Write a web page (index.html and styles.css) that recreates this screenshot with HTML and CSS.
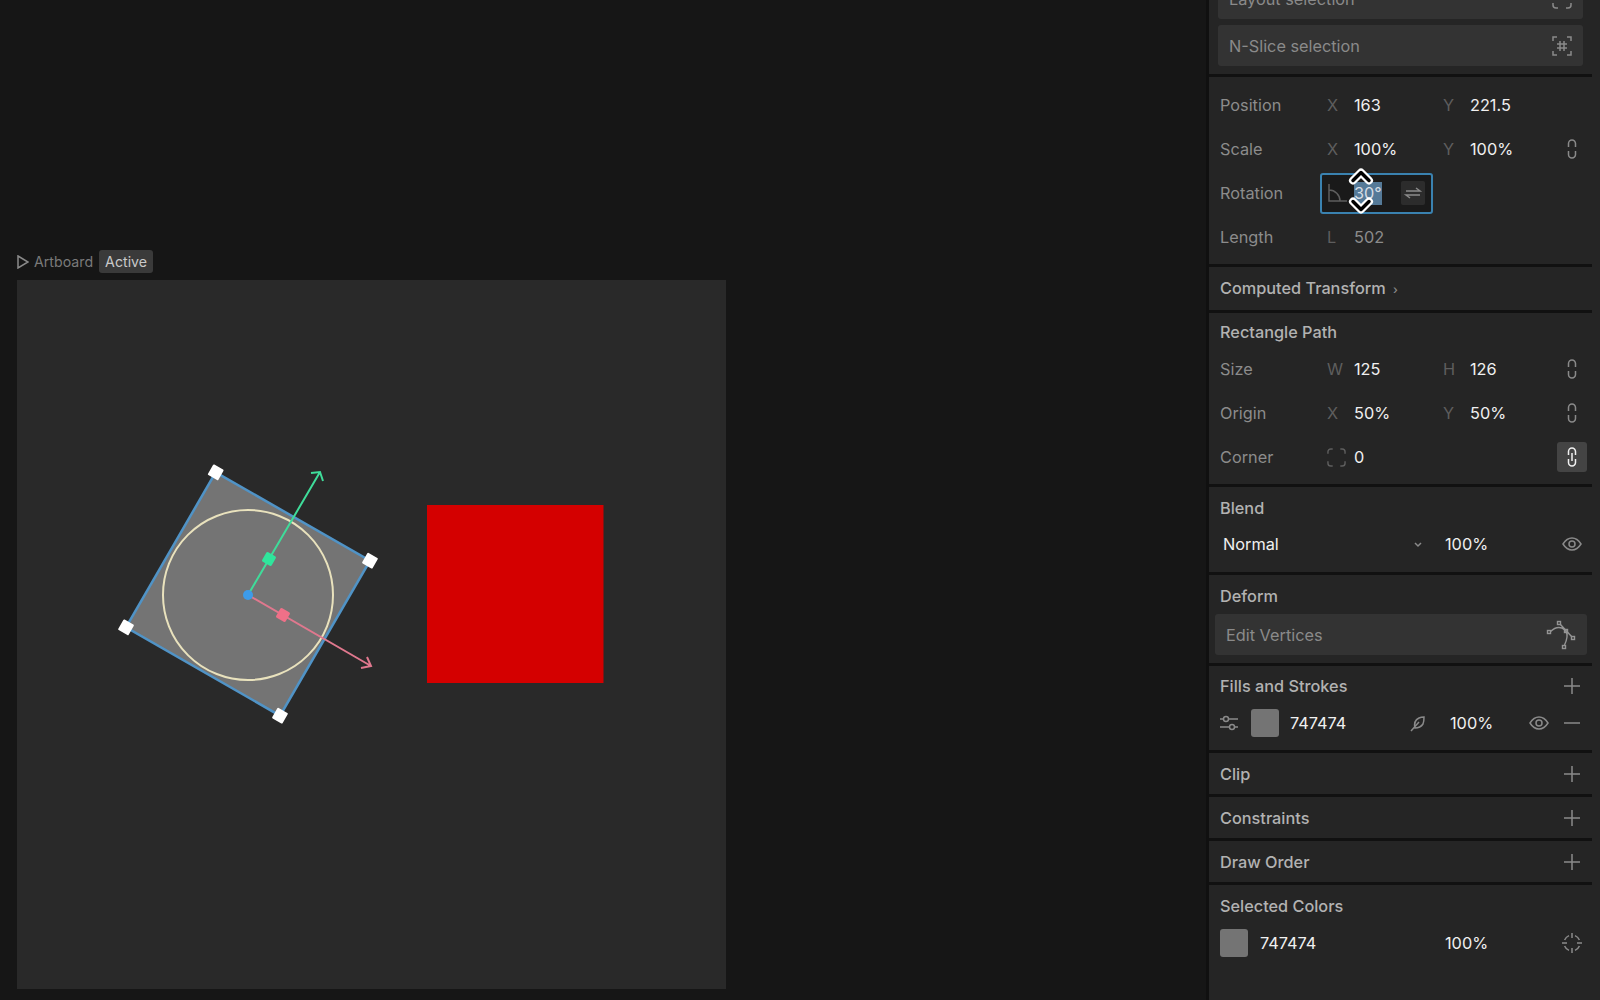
FILE: index.html
```html
<!DOCTYPE html>
<html lang="en">
<head>
    <meta charset="UTF-8">
    <meta name="viewport" content="width=device-width, initial-scale=1.0">
    <title>Rive Editor</title>
    <link rel="stylesheet" href="styles.css">
</head>
<body>
    <svg class="sprite" xmlns="http://www.w3.org/2000/svg">
        <symbol id="i-link" viewBox="0 0 22 22"><path d="M7.500 9V5.500a3.500 3.500 0 0 1 7 0V9M7.500 13v3.500a3.500 3.500 0 0 0 7 0V13"/></symbol>
        <symbol id="i-link-on" viewBox="0 0 22 22"><path d="M7.500 9V5.500a3.500 3.500 0 0 1 7 0V9M7.500 13v3.500a3.500 3.500 0 0 0 7 0V13M11 7v8"/></symbol>
        <symbol id="i-eye" viewBox="0 0 22 22"><path d="M2 11c2.500-4 5.500-6 9-6s6.500 2 9 6c-2.500 4-5.500 6-9 6s-6.500-2-9-6z"/><circle cx="11" cy="11" r="3"/></symbol>
        <symbol id="i-plus" viewBox="0 0 22 22"><path d="M11 3v16M3 11h16"/></symbol>
        <symbol id="i-minus" viewBox="0 0 22 22"><path d="M3 11h16"/></symbol>
        <symbol id="i-target" viewBox="0 0 22 22"><path d="M8 3.600A8 8 0 0 0 3.600 8M14 3.600A8 8 0 0 1 18.400 8M18.400 14A8 8 0 0 1 14 18.400M8 18.400A8 8 0 0 1 3.600 14M11 1v5M11 16v5M1 11h5M16 11h5"/></symbol>
        <symbol id="i-corners" viewBox="0 0 20 20"><path d="M1 6V4a3 3 0 0 1 3-3h2M14 1h2a3 3 0 0 1 3 3v2M19 14v2a3 3 0 0 1-3 3h-2M6 19H4a3 3 0 0 1-3-3v-2"/></symbol>
        <symbol id="i-nslice" viewBox="0 0 20 20"><path d="M1 5V1h4M15 1h4v4M19 15v4h-4M5 19H1v-4M8 5v10M12 5v10M5 8h10M5 12h10"/></symbol>
        <symbol id="i-sliders" viewBox="0 0 20 20"><path d="M0 6h3.500M8.500 6H18M0 14h9.500M14.500 14H18"/><circle cx="6" cy="6" r="2.500"/><circle cx="12" cy="14" r="2.500"/></symbol>
        <symbol id="i-feather" viewBox="0 0 18 18"><path d="M6 14c-1-4 0-8 4-10 2-1 4-1 5-1 0 2 0 5-1 7-2 3-5 4-8 4zM2 17l8-9"/></symbol>
    </svg>

    <main class="canvas">
        <div class="artboard-label">
            <svg class="play" viewBox="0 0 12 14"><path d="M1 1l10 6-10 6z"/></svg>
            <span>Artboard</span>
            <span class="chip">Active</span>
        </div>
        <div class="artboard">
            <svg class="stage" viewBox="17 280 709 709">
                <rect class="red-box" x="427" y="505" width="176.500" height="178"/>
                <polygon class="shape" points="215.700,472.300 370,560.700 280,715.700 126,627.300"/>
                <circle class="shape-circle" cx="248" cy="595" r="85"/>
                <path class="axis-y" d="M248 595L320 472M311 473l9-1 3 9"/>
                <path class="axis-x" d="M248 595L371 666M361 668l10-2-4-9"/>
                <rect class="knob-y" x="263.500" y="553.500" width="11" height="11" rx="1.500" transform="rotate(30 269 559)"/>
                <rect class="knob-x" x="277.500" y="609.500" width="11" height="11" rx="1.500" transform="rotate(30 283 615)"/>
                <circle class="origin" cx="248" cy="595" r="5"/>
                <rect class="handle" x="209.700" y="466.300" width="12" height="12" rx="1" transform="rotate(30 215.700 472.300)"/>
                <rect class="handle" x="364" y="554.700" width="12" height="12" rx="1" transform="rotate(30 370 560.700)"/>
                <rect class="handle" x="274" y="709.700" width="12" height="12" rx="1" transform="rotate(30 280 715.700)"/>
                <rect class="handle" x="120" y="621.300" width="12" height="12" rx="1" transform="rotate(30 126 627.300)"/>
            </svg>
        </div>
    </main>

    <aside class="panel">
        <section class="section section-tools">
            <div class="wide-btn">Layout selection <svg class="icon-20"><use href="#i-corners"/></svg></div>
            <div class="wide-btn">N-Slice selection <svg class="icon-20"><use href="#i-nslice"/></svg></div>
        </section>

        <section class="section section-rows">
            <div class="row">
                <span class="label">Position</span>
                <span class="axis">X</span><span class="value">163</span>
                <span class="axis">Y</span><span class="value">221.5</span>
            </div>
            <div class="row">
                <span class="label">Scale</span>
                <span class="axis">X</span><span class="value">100%</span>
                <span class="axis">Y</span><span class="value">100%</span>
                <svg class="icon"><use href="#i-link"/></svg>
            </div>
            <div class="row">
                <span class="label">Rotation</span>
                <div class="rotation-input">
                    <svg class="angle" viewBox="0 0 20 20"><path d="M2 1v17h18M2 7a11 11 0 0 1 11 11"/></svg>
                    <span class="selected">30°</span>
                    <span class="swap"><svg viewBox="0 0 24 24"><path d="M5 10h14l-4-3M19 14H5l4 3"/></svg></span>
                    <svg class="cursor" viewBox="0 0 28 50">
                        <path class="cursor-out" d="M6 14.500l8-8 8 8M6 35.500l8 8 8-8"/>
                        <path class="cursor-in" d="M6 14.500l8-8 8 8M6 35.500l8 8 8-8"/>
                    </svg>
                </div>
            </div>
            <div class="row">
                <span class="label">Length</span>
                <span class="axis">L</span><span class="value dim">502</span>
            </div>
        </section>

        <section class="section section-collapsed">
            <h3 class="title">Computed Transform <span class="caret">›</span></h3>
        </section>

        <section class="section section-rect">
            <h3 class="title">Rectangle Path</h3>
            <div class="row">
                <span class="label">Size</span>
                <span class="axis">W</span><span class="value">125</span>
                <span class="axis">H</span><span class="value">126</span>
                <svg class="icon"><use href="#i-link"/></svg>
            </div>
            <div class="row">
                <span class="label">Origin</span>
                <span class="axis">X</span><span class="value">50%</span>
                <span class="axis">Y</span><span class="value">50%</span>
                <svg class="icon"><use href="#i-link"/></svg>
            </div>
            <div class="row">
                <span class="label">Corner</span>
                <svg class="corner-icon"><use href="#i-corners"/></svg><span class="value">0</span>
                <span class="link-on"><svg class="icon"><use href="#i-link-on"/></svg></span>
            </div>
        </section>

        <section class="section section-blend">
            <h3 class="title">Blend</h3>
            <div class="blend-row">
                <span class="value">Normal</span>
                <svg class="chevron" viewBox="0 0 14 14"><path d="M4 6l3 3 3-3"/></svg>
                <span class="value">100%</span>
                <svg class="icon"><use href="#i-eye"/></svg>
            </div>
        </section>

        <section class="section section-deform">
            <h3 class="title">Deform</h3>
            <div class="wide-btn deform-btn">Edit Vertices
                <svg class="vertices" viewBox="0 0 32 30">
                    <path d="M5.500 11.500Q11 6 17 8Q23 11 22 17Q21.500 21 19.500 25M15 4l12 13"/>
                    <rect x="2.500" y="10.500" width="3" height="3"/><rect x="12.500" y="1.500" width="3" height="3"/>
                    <rect x="19.500" y="9.500" width="3" height="3"/><rect x="26.500" y="16.500" width="3" height="3"/>
                    <rect x="17.500" y="25.500" width="3" height="3"/>
                </svg>
            </div>
        </section>

        <section class="section section-fills">
            <div class="title-row">
                <h3 class="title">Fills and Strokes</h3>
                <svg class="icon"><use href="#i-plus"/></svg>
            </div>
            <div class="fill-row">
                <svg class="icon-20"><use href="#i-sliders"/></svg>
                <span class="swatch"></span>
                <span class="value">747474</span>
                <svg class="icon-18"><use href="#i-feather"/></svg>
                <span class="value">100%</span>
                <svg class="icon"><use href="#i-eye"/></svg>
                <svg class="icon"><use href="#i-minus"/></svg>
            </div>
        </section>

        <section class="section section-collapsed">
            <div class="title-row"><h3 class="title">Clip</h3><svg class="icon"><use href="#i-plus"/></svg></div>
        </section>
        <section class="section section-collapsed">
            <div class="title-row"><h3 class="title">Constraints</h3><svg class="icon"><use href="#i-plus"/></svg></div>
        </section>
        <section class="section section-collapsed">
            <div class="title-row"><h3 class="title">Draw Order</h3><svg class="icon"><use href="#i-plus"/></svg></div>
        </section>

        <section class="section section-last">
            <h3 class="title">Selected Colors</h3>
            <div class="color-row">
                <span class="swatch"></span>
                <span class="value">747474</span>
                <span class="value">100%</span>
                <svg class="icon"><use href="#i-target"/></svg>
            </div>
        </section>
    </aside>
</body>
</html>
```

FILE: styles.css
```css
* {
    box-sizing: border-box;
}
body {
    margin: 0;
    width: 1600px;
    height: 1000px;
    display: flex;
    overflow: hidden;
    background: #161616;
    color: #8c8c8c;
    font-family: Inter, "Liberation Sans", sans-serif;
    font-size: 16.3px;
}
svg {
    display: block;
    fill: none;
    stroke: currentColor;
    stroke-width: 1.5;
}
.sprite {
    display: none;
}

/* canvas */
.canvas {
    flex: 1;
    display: flex;
    flex-direction: column;
    justify-content: flex-end;
    padding: 0 0 11px 17px;
}
.artboard-label {
    display: flex;
    align-items: center;
    height: 23px;
    margin-bottom: 7px;
    font-size: 14.2px;
    color: #7a7a7a;
}
.play {
    width: 12px;
    height: 14px;
    margin-right: 5px;
    color: #8a8a8a;
}
.chip {
    margin-left: 6px;
    height: 23px;
    line-height: 23px;
    padding: 0 6px;
    border-radius: 3px;
    background: #3a3a3a;
    color: #c9c9c9;
}
.artboard {
    width: 709px;
    height: 709px;
    background: #292929;
}
.stage {
    width: 709px;
    height: 709px;
    stroke: none;
}
.red-box {
    fill: #d40000;
}
.shape {
    fill: #747474;
    stroke: #5093c6;
    stroke-width: 2.5;
}
.shape-circle {
    stroke: #e9e2bd;
    stroke-width: 2;
}
.axis-y {
    stroke: #3fdc9a;
    stroke-width: 2;
}
.axis-x {
    stroke: #e0788e;
    stroke-width: 2;
}
.knob-y {
    fill: #2fe59c;
}
.knob-x {
    fill: #ef7088;
}
.origin {
    fill: #3d9be9;
}
.handle {
    fill: #fff;
}

/* right panel */
.panel {
    width: 394px;
    height: 1000px;
    flex-shrink: 0;
    margin-left: -3px;
    background: #252525;
    border-left: 3px solid #101010;
}
.section {
    margin-right: 8px;
    border-bottom: 3px solid #111;
}
.section-tools {
    display: flex;
    flex-direction: column;
    gap: 6px;
    margin-top: -22px;
    padding: 0 9px 8px;
}
.section-rows {
    padding: 6px 0 5px;
}
.section-collapsed {
    padding: 11px 0 10px;
}
.section-rect {
    padding: 9px 0 5px;
}
.section-rect .title {
    margin-bottom: 5px;
}
.section-blend {
    padding: 11px 0 8px;
}
.section-deform {
    padding: 11px 0 8px;
}
.section-fills {
    padding: 10px 0 10px;
}
.section-last {
    padding: 11px 0 0;
    border-bottom: none;
}

.title {
    margin: 0;
    padding-left: 11px;
    font-size: 16.3px;
    font-weight: 500;
    line-height: 20px;
    color: #b2b2b2;
}
.title-row {
    display: flex;
    justify-content: space-between;
    align-items: center;
    height: 20px;
    padding-right: 9px;
}
.caret {
    margin-left: 3px;
    font-size: 12px;
    color: #8a8a8a;
}

.wide-btn {
    display: flex;
    justify-content: space-between;
    align-items: center;
    height: 41px;
    padding: 0 11px;
    border-radius: 3px;
    background: #333;
    color: #8a8a8a;
}
.deform-btn {
    margin: 8px 5px 0 6px;
    padding-right: 10px;
}
.vertices {
    width: 32px;
    height: 30px;
    stroke-width: 1.4;
    color: #949494;
}

.row {
    display: grid;
    grid-template-columns: 107px 27px 89px 27px 1fr 22px;
    align-items: center;
    height: 44px;
    padding: 0 9px 0 11px;
}
.label {
    color: #8c8c8c;
}
.axis {
    color: #5e5e5e;
}
.value {
    color: #f0f0f0;
}
.dim {
    color: #8c8c8c;
}
.row .icon {
    grid-column: 6;
}
.icon {
    width: 22px;
    height: 22px;
    color: #8a8a8a;
}
.icon-20 {
    width: 20px;
    height: 20px;
    color: #8a8a8a;
}
.icon-18 {
    width: 18px;
    height: 18px;
    color: #8a8a8a;
}
.corner-icon {
    width: 19px;
    height: 19px;
    color: #5e5e5e;
}
.link-on {
    grid-column: 6;
    display: flex;
    align-items: center;
    justify-content: center;
    width: 30px;
    height: 30px;
    margin-left: -4px;
    border-radius: 3px;
    background: #444;
}
.link-on .icon {
    color: #f0f0f0;
}

.rotation-input {
    grid-column: 2 / 4;
    position: relative;
    display: flex;
    align-items: center;
    width: 113px;
    height: 41px;
    margin-left: -7px;
    padding: 0 6px 0 5px;
    border: 2px solid #3a82b0;
    border-radius: 3px;
    background: #1a1a1a;
}
.angle {
    width: 20px;
    height: 20px;
    margin-right: 7px;
    color: #5e5e5e;
}
.selected {
    padding: 1px 0;
    line-height: 21px;
    background: #557a98;
    color: #d5dde5;
}
.swap {
    display: flex;
    margin-left: auto;
    border-radius: 2px;
    background: #2c2c2c;
}
.swap svg {
    width: 24px;
    height: 24px;
    color: #8a8a8a;
}
/* resize cursor sitting on top of the field */
.cursor {
    position: absolute;
    left: 25px;
    top: -9px;
    width: 28px;
    height: 50px;
}
.cursor-out {
    stroke: #fff;
    stroke-width: 8;
    stroke-linecap: round;
    stroke-linejoin: round;
}
.cursor-in {
    stroke: #000;
    stroke-width: 3.5;
    stroke-linecap: round;
    stroke-linejoin: round;
}

.blend-row {
    display: grid;
    grid-template-columns: 188px 34px 1fr 22px;
    align-items: center;
    height: 40px;
    margin-top: 6px;
    padding: 0 9px 0 14px;
}
.chevron {
    width: 14px;
    height: 14px;
    color: #8a8a8a;
}
.fill-row {
    display: grid;
    grid-template-columns: 31px 39px 119px 41px 1fr 33px 22px;
    align-items: center;
    height: 34px;
    margin-top: 10px;
    padding: 0 9px 0 11px;
}
.color-row {
    display: grid;
    grid-template-columns: 40px 185px 1fr 22px;
    align-items: center;
    height: 34px;
    margin-top: 10px;
    padding: 0 9px 0 11px;
}
.swatch {
    display: block;
    width: 28px;
    height: 28px;
    border-radius: 3px;
    background: #747474;
}
```
